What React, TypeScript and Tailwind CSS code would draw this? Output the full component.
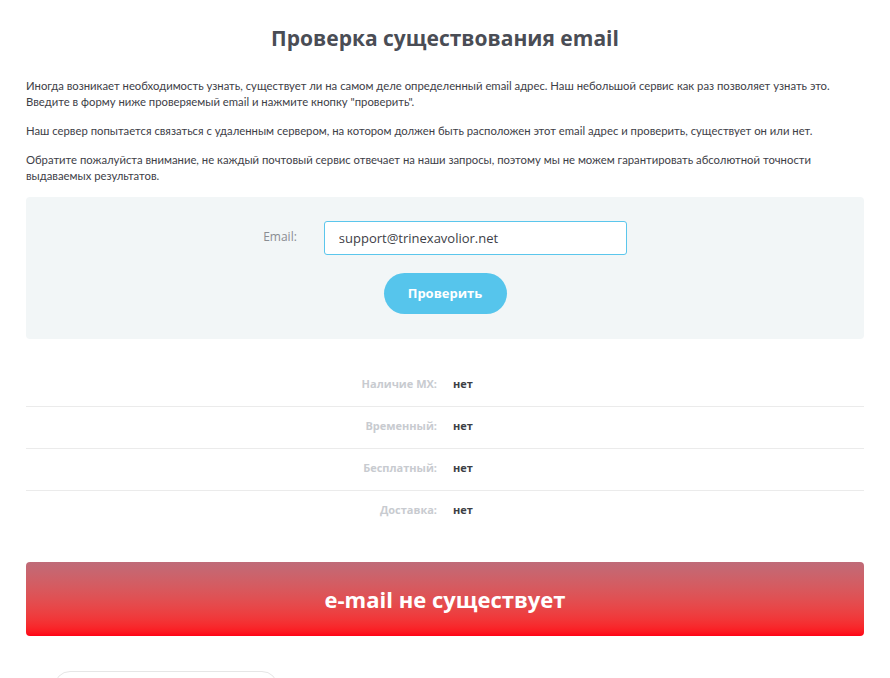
import React, { useState } from 'react';

// строки результата проверки
const resultRows = [
  { label: 'Наличие MX:', value: 'нет' },
  { label: 'Временный:', value: 'нет' },
  { label: 'Бесплатный:', value: 'нет' },
  { label: 'Доставка:', value: 'нет' },
];

const bodyFont = { fontFamily: 'Lato, "Noto Sans", sans-serif' };
const headFont = { fontFamily: '"Open Sans", "Noto Sans", sans-serif' };

const App: React.FC = () => {
  const [email, setEmail] = useState('support@trinexavolior.net');

  return (
    <div className="min-h-screen bg-white px-[26px] pt-[24px]" style={bodyFont}>
      <h1
        className="text-center text-[21px] font-bold leading-[28px] text-[#4a4d55]"
        style={headFont}
      >
        Проверка существования email
      </h1>

      <div className="mt-[26px] space-y-[13px] text-[11.3px] leading-[16px] text-[#3d4047]">
        <p>
          Иногда возникает необходимость узнать, существует ли на самом деле определенный email адрес. Наш небольшой сервис как раз позволяет узнать это.
          <br />
          Введите в форму ниже проверяемый email и нажмите кнопку "проверить".
        </p>
        <p>
          Наш сервер попытается связаться с удаленным сервером, на котором должен быть расположен этот email адрес и проверить, существует он или нет.
        </p>
        <p>
          Обратите пожалуйста внимание, не каждый почтовый сервис отвечает на наши запросы, поэтому мы не можем гарантировать абсолютной точности
          <br />
          выдаваемых результатов.
        </p>
      </div>

      <div className="mt-[13px] flex h-[142px] flex-col items-center rounded-[4px] bg-[#f2f6f7] pt-[24px]">
        <div className="flex items-center gap-[27px]">
          <label className="pb-[2px] text-[12px] text-[#8a8d92]" style={headFont}>
            Email:
          </label>
          <input
            type="text"
            value={email}
            onChange={(e) => setEmail(e.target.value)}
            className="h-[34px] w-[303px] rounded-[3px] border border-[#5bc6ec] bg-white px-[14px] text-[13px] text-[#3d4047] outline-none"
            style={headFont}
          />
        </div>
        <button
          className="mt-[18px] h-[41px] w-[123px] rounded-full bg-[#56c5ec] text-[13px] font-bold text-white"
          style={headFont}
        >
          Проверить
        </button>
      </div>

      <div className="mt-[26px] text-[11px] font-bold" style={headFont}>
        {resultRows.map((row, i) => (
          <div
            key={row.label}
            className={`flex h-[42px] items-center pb-[3px] ${i < resultRows.length - 1 ? 'border-b border-[#ebebeb]' : ''}`}
          >
            <span className="w-[411px] text-right text-[#c8cbd0]">{row.label}</span>
            <span className="ml-[16px] text-[#3c3f45]">{row.value}</span>
          </div>
        ))}
      </div>

      <div
        className="mt-[29px] flex h-[74px] items-center justify-center rounded-[4px] bg-gradient-to-b from-[#bf6b78] to-[#ff0015] text-[22px] font-bold text-white"
        style={headFont}
      >
        e-mail не существует
      </div>

      <div className="ml-[28px] mt-[35px] h-[30px] w-[224px] rounded-t-[16px] border border-[#e6e6e6]" />
    </div>
  );
};

export default App;
